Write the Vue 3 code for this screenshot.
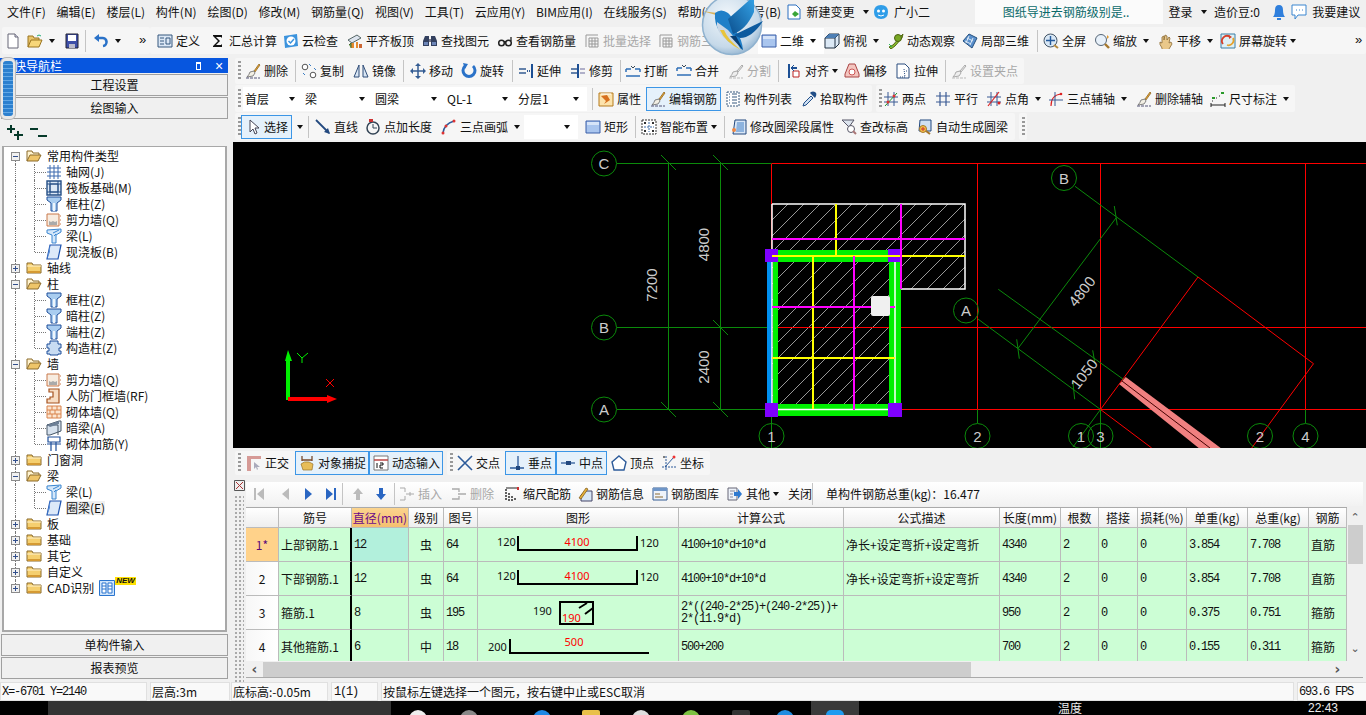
<script setup>
const menus = ['文件(F)', '编辑(E)', '楼层(L)', '构件(N)', '绘图(D)', '修改(M)', '钢筋量(Q)', '视图(V)', '工具(T)', '云应用(Y)', 'BIM应用(I)', '在线服务(S)', '帮助(H)', '版本号(B)']

const sep = (w) => ({ sep: 1, w })
const grip = (w) => ({ grip: 1, w })

const topLeft = [
  { i: 'new', w: 22 }, { i: 'open', w: 37, a: 1 }, { i: 'save', w: 21 }, sep(8), { i: 'undo', w: 46, a: 1 }, { more: 1, w: 11 },
]
const topMain = [
  { i: 'define', t: '定义', w: 53 }, { i: 'sigma', t: '汇总计算', w: 73 }, { i: 'cloud', t: '云检查', w: 64 },
  { i: 'level', t: '平齐板顶', w: 75 }, { i: 'find', t: '查找图元', w: 75 }, { i: 'glasses', t: '查看钢筋量', w: 87 },
  { i: 'batch', t: '批量选择', w: 74, dim: 1 }, { i: 'batch', t: '钢筋三维', w: 100, dim: 1 },
  { i: 'flat', t: '二维', w: 66, a: 1, white: 1 }, { i: 'box', t: '俯视', w: 64, a: 1 }, { i: 'orbit', t: '动态观察', w: 74 },
  { i: 'local', t: '局部三维', w: 75 }, sep(6), { i: 'full', t: '全屏', w: 51 }, { i: 'zoom', t: '缩放', w: 64, a: 1 },
  { i: 'hand', t: '平移', w: 62, a: 1 }, { i: 'spin', t: '屏幕旋转', w: 135, a: 2 }, { more: 1, w: 11 },
]

const rows = [
  [
    [
      grip(10), { i: 'brush', t: '删除', w: 50 }, sep(6), { i: 'copy', t: '复制', w: 52 }, { i: 'mirror', t: '镜像', w: 50 }, sep(7),
      { i: 'move', t: '移动', w: 51 }, { i: 'rotate', t: '旋转', w: 51 }, sep(6), { i: 'extend', t: '延伸', w: 52 },
      { i: 'trim', t: '修剪', w: 50 }, sep(5), { i: 'break', t: '打断', w: 51 }, { i: 'merge', t: '合并', w: 52 },
      { i: 'split', t: '分割', w: 50, dim: 1 }, sep(8), { i: 'align', t: '对齐', w: 58, a: 2 }, { i: 'offset', t: '偏移', w: 51 },
      { i: 'stretch', t: '拉伸', w: 50 }, sep(6), { i: 'split', t: '设置夹点', w: 73, dim: 1 },
    ],
  ],
  [
    [
      grip(8), { s: '首层', w: 60 }, { s: '梁', w: 70 }, { s: '圆梁', w: 72 }, { s: 'QL-1', w: 71 }, { s: '分层1', w: 71 }, { sp: 1, w: 5 }, sep(6),
      { i: 'prop', t: '属性', w: 48 }, { i: 'brush', t: '编辑钢筋', w: 75, on: 1 }, { sp: 1, w: 4 }, { i: 'list', t: '构件列表', w: 76 }, { i: 'pick', t: '拾取构件', w: 71 },
    ],
    [
      grip(7), { i: 'two', t: '两点', w: 52 }, { i: 'para', t: '平行', w: 51 }, { i: 'angle', t: '点角', w: 62, a: 1 },
      { i: 'three', t: '三点辅轴', w: 88, a: 1 }, { i: 'brush', t: '删除辅轴', w: 74 }, { i: 'dim', t: '尺寸标注', w: 85, a: 1 },
    ],
  ],
  [
    [
      grip(6), { i: 'cursor', t: '选择', w: 51, on: 1 }, { arrow: 1, w: 16 }, sep(7), { i: 'line', t: '直线', w: 50 }, { i: 'ptlen', t: '点加长度', w: 76 },
      { i: 'arc', t: '三点画弧', w: 83, a: 1 }, { s: '', w: 54 }, { sp: 1, w: 7 }, { i: 'flat', t: '矩形', w: 50 }, sep(6),
      { i: 'smart', t: '智能布置', w: 83, a: 2 }, sep(7), { i: 'seg', t: '修改圆梁段属性', w: 110 }, { i: 'elev', t: '查改标高', w: 76 },
      { i: 'auto', t: '自动生成圆梁', w: 98 },
    ],
    [grip(8)],
  ],
]

const snapRows = [
  [
    grip(11), { i: 'ortho', t: '正交', w: 49 }, { i: 'snap', t: '对象捕捉', w: 74, on: 1 }, { i: 'dyn', t: '动态输入', w: 74, on: 1 },
  ],
  [
    grip(10), { i: 'cross', t: '交点', w: 48 }, { i: 'perp', t: '垂点', w: 51, on: 1 }, { i: 'mid', t: '中点', w: 51, on: 1 }, { sp: 1, w: 4 },
    { i: 'vertex', t: '顶点', w: 50 }, { i: 'coord', t: '坐标', w: 49 },
  ],
]

const tableTools = [
  { i: 'first', w: 27, dim: 1 }, { i: 'prev', w: 22, dim: 1 }, { i: 'next', w: 23 }, { i: 'last', w: 19 }, sep(8),
  { i: 'up', w: 23, dim: 1 }, { i: 'down', w: 21 }, sep(5), { i: 'insert', t: '插入', w: 52, dim: 1 }, { i: 'remove', t: '删除', w: 53, dim: 1 },
  { i: 'scale', t: '缩尺配筋', w: 73 }, { i: 'info', t: '钢筋信息', w: 75 }, { i: 'lib', t: '钢筋图库', w: 75 }, { i: 'other', t: '其他', w: 61, a: 2 },
  { t: '关闭', w: 24 }, sep(14),
]

const tree = [
  { f: 'open', t: '常用构件类型' },
  { i: 'grid', t: '轴网(J)' }, { i: 'raft', t: '筏板基础(M)' }, { i: 'col', t: '框柱(Z)' }, { i: 'wall', t: '剪力墙(Q)' }, { i: 'beam', t: '梁(L)' }, { i: 'slab', t: '现浇板(B)', last: 1 },
  { f: 'closed', t: '轴线' },
  { f: 'open', t: '柱' },
  { i: 'col', t: '框柱(Z)' }, { i: 'col', t: '暗柱(Z)' }, { i: 'col', t: '端柱(Z)' }, { i: 'gcol', t: '构造柱(Z)', last: 1 },
  { f: 'open', t: '墙' },
  { i: 'wall', t: '剪力墙(Q)' }, { i: 'door', t: '人防门框墙(RF)' }, { i: 'brick', t: '砌体墙(Q)' }, { i: 'dark', t: '暗梁(A)' }, { i: 'rebar', t: '砌体加筋(Y)', last: 1 },
  { f: 'closed', t: '门窗洞' },
  { f: 'open', t: '梁' },
  { i: 'beam', t: '梁(L)' }, { i: 'slab', t: '圈梁(E)', last: 1, sel: 1 },
  { f: 'closed', t: '板' }, { f: 'closed', t: '基础' }, { f: 'closed', t: '其它' }, { f: 'closed', t: '自定义' },
  { f: 'closed', t: 'CAD识别', cad: 1, end: 1 },
]

const colWidths = [33, 73, 57, 35, 34, 201, 165, 156, 61, 38, 39, 49, 61, 61, 38]
const heads = ['', '筋号', '直径(mm)', '级别', '图号', '图形', '计算公式', '公式描述', '长度(mm)', '根数', '搭接', '损耗(%)', '单重(kg)', '总重(kg)', '钢筋']
const bars = [
  { n: '1*', name: '上部钢筋.1', d: '12', g: '虫', fig: '64', shape: 'u', f: ['4100+10*d+10*d'], desc: '净长+设定弯折+设定弯折', len: '4340', w1: '3.854', w2: '7.708', k: '直筋', h: 34 },
  { n: '2', name: '下部钢筋.1', d: '12', g: '虫', fig: '64', shape: 'u', f: ['4100+10*d+10*d'], desc: '净长+设定弯折+设定弯折', len: '4340', w1: '3.854', w2: '7.708', k: '直筋', h: 34 },
  { n: '3', name: '箍筋.1', d: '8', g: '虫', fig: '195', shape: 'box', f: ['2*((240-2*25)+(240-2*25))+', '2*(11.9*d)'], desc: '', len: '950', w1: '0.375', w2: '0.751', k: '箍筋', h: 34 },
  { n: '4', name: '其他箍筋.1', d: '6', g: '中', fig: '18', shape: 'l', f: ['500+200'], desc: '', len: '700', w1: '0.155', w2: '0.311', k: '箍筋', h: 33 },
]

const hLines = [163.5, 327.5, 409.5]
const vLines = [771.5, 977.5, 1100.5, 1305.5]
const bubbles = [
  { x: 604, y: 163.5, t: 'C' }, { x: 604, y: 327.5, t: 'B' }, { x: 604, y: 409.5, t: 'A' },
  { x: 966, y: 310.5, t: 'A' }, { x: 1064, y: 178, t: 'B' },
  { x: 771.5, y: 436, t: '1' }, { x: 977.5, y: 436, t: '2' }, { x: 1081, y: 436, t: '1' },
  { x: 1100.5, y: 436, t: '3' }, { x: 1260, y: 436, t: '2' }, { x: 1305.5, y: 436, t: '4' },
]
const dimTexts = [
  { t: '7200', x: 651.5, y: 285, r: -90 }, { t: '4800', x: 703, y: 244.5, r: -90 }, { t: '2400', x: 703, y: 367, r: -90 },
  { t: '4800', x: 1081.7, y: 291.3, r: -52 }, { t: '1050', x: 1084, y: 373.7, r: -52 },
]
</script>

<template>
  <div class="app">
    <!-- icon sheet -->
    <svg class="sheet" width="0" height="0">
      <symbol id="i-new" viewBox="0 0 16 16"><path d="M3 1h7l3 3v11H3z" fill="#fff" stroke="#667"/><path d="M10 1v3h3" fill="#dde" stroke="#667"/></symbol>
      <symbol id="i-open" viewBox="0 0 16 16"><path d="M1 14V3h5l1 2h5v3" fill="#e9c46a" stroke="#9a7420"/><path d="M1 14l3-7h11l-3 7z" fill="#f7d679" stroke="#9a7420"/><path d="M10 3q2-2 4 0" fill="none" stroke="#2a7"/></symbol>
      <symbol id="i-save" viewBox="0 0 16 16"><path d="M2 1h12v14H2z" fill="#3e4fa8" stroke="#223"/><path d="M4 2h8v6H4z" fill="#fff"/><path d="M5 11h6v4H5z" fill="#bbc"/></symbol>
      <symbol id="i-undo" viewBox="0 0 16 16"><path d="M4 5h5a4 4 0 0 1 1 8" fill="none" stroke="#2a72c8" stroke-width="2.6"/><path d="M6 1v8L1 5z" fill="#2a72c8"/></symbol>
      <symbol id="i-define" viewBox="0 0 16 16"><path d="M1 2h14v12H1z" fill="#dbe7f5" stroke="#36587f"/><path d="M3 5h4M3 8h4M3 11h4M9 5h4v6H9z" fill="none" stroke="#36587f"/></symbol>
      <symbol id="i-sigma" viewBox="0 0 16 16"><path d="M3 2h9v3L11 4H6l4 4-4 4h5l1-1v3H3v-1l5-5-5-5z" fill="#111"/></symbol>
      <symbol id="i-cloud" viewBox="0 0 16 16"><path d="M1 3l13-2 1 12-13 2z" fill="#3b93dd"/><circle cx="8" cy="8" r="4.5" fill="#fff"/><path d="M5.5 8l2 2 3.500-4" fill="none" stroke="#3b93dd" stroke-width="1.500"/></symbol>
      <symbol id="i-level" viewBox="0 0 16 16"><path d="M1 7l9-5 4 3-9 5z" fill="#dde4ee" stroke="#566"/><path d="M4 10h3v5H4zM9 9h2v6H9z" fill="#e68a2e"/><path d="M12 11h3v4h-3z" fill="#c63"/><path d="M2 12l2-2v5" fill="#7a5" stroke="#463"/></symbol>
      <symbol id="i-find" viewBox="0 0 16 16"><path d="M3 3h4v10H1V8zM9 3h4l2 5v5H9z" fill="#33405f"/><path d="M7 6h2v3H7z" fill="#778"/><path d="M2 9h4v3H2zM10 9h4v3h-4z" fill="#6d86b8"/></symbol>
      <symbol id="i-glasses" viewBox="0 0 16 16"><circle cx="4.500" cy="10" r="2.800" fill="none" stroke="#222" stroke-width="1.500"/><circle cx="11.500" cy="10" r="2.800" fill="none" stroke="#222" stroke-width="1.500"/><path d="M7 9q1-1 2 0M14 8V4" fill="none" stroke="#222" stroke-width="1.300"/></symbol>
      <symbol id="i-batch" viewBox="0 0 16 16"><path d="M2 2h12M2 2v12M5 5h9v9H5zM5 8h9M5 11h9M8 5v9M11 5v9" fill="none" stroke="#999"/></symbol>
      <symbol id="i-flat" viewBox="0 0 16 16"><path d="M1 2h14v12H1z" fill="#a9c5ee" stroke="#3a5ea8"/><path d="M2 3h12v3H2z" fill="#d6e4f8"/></symbol>
      <symbol id="i-box" viewBox="0 0 16 16"><path d="M1 5l4-4h10v10l-4 4H1z" fill="#dce9f6" stroke="#234"/><path d="M1 5h10v10M11 5l4-4" fill="none" stroke="#234"/><path d="M1 5l4-4h10l-4 4z" fill="#4d7fb5"/></symbol>
      <symbol id="i-orbit" viewBox="0 0 16 16"><path d="M1 14l4-2 8-9 2-2-1 4-7 8-4 3z" fill="#8aba2f" stroke="#546b12"/><circle cx="10" cy="5" r="3.500" fill="#79a825" stroke="#4b6210"/><path d="M1 11l3 3" stroke="#2b5"/></symbol>
      <symbol id="i-local" viewBox="0 0 16 16"><path d="M1 8l6-7 8 4-5 10z" fill="#5a8fcb" stroke="#24507f"/><path d="M5 5l6 3M3 8l6 3M7 3l-3 7M11 5l-3 7" stroke="#dce9f6" fill="none"/></symbol>
      <symbol id="i-full" viewBox="0 0 16 16"><circle cx="7.500" cy="7.500" r="6.500" fill="#d8e7f5" stroke="#456"/><path d="M7.500 3v9M3 7.500h9" stroke="#245a9c" stroke-width="1.400"/><path d="M11 12l4 3" stroke="#b5893f" stroke-width="2"/></symbol>
      <symbol id="i-zoom" viewBox="0 0 16 16"><circle cx="7" cy="7" r="5.500" fill="#e8f1fa" stroke="#567"/><path d="M11 11l4 4" stroke="#a5772c" stroke-width="2.400"/><path d="M13 2l2 2-2 2" fill="#d93"/></symbol>
      <symbol id="i-hand" viewBox="0 0 16 16"><path d="M4 15q-3-4-2-6l2 1V4l2-1v4l1-5 2 1v4l2-3 1 1-1 5 2-1 1 2-3 5q-1 3-7 3z" fill="#e9c88a" stroke="#8a6a33" stroke-width=".8"/></symbol>
      <symbol id="i-spin" viewBox="0 0 16 16"><path d="M1 1h14v14H1z" fill="#dff0f5" stroke="#3b7ea6"/><path d="M3 11a5 5 0 0 1 7-7" fill="none" stroke="#d5402b" stroke-width="1.800"/><path d="M13 5a5 5 0 0 1-6 7" fill="none" stroke="#e5a12b" stroke-width="1.800"/><path d="M9 2l3 2-3 2z" fill="#d5402b"/></symbol>
      <symbol id="i-brush" viewBox="0 0 16 16"><path d="M9 8l5-7 1 1-5 7z" fill="#e0a63a" stroke="#8a5c12" stroke-width=".7"/><path d="M5 9l4-1 1 2-2 3-6 1q2-2 3-5z" fill="#f2efe4" stroke="#666" stroke-width=".8"/><path d="M1 15h14" stroke="#557" stroke-dasharray="3 1"/></symbol>
      <symbol id="i-copy" viewBox="0 0 16 16"><circle cx="4" cy="4" r="2.800" fill="#fff" stroke="#555"/><circle cx="12" cy="12" r="2.800" fill="#fff" stroke="#555"/><path d="M8 1l2 2M13 5l2 2M2 10l2 2" stroke="#3b7ec4"/></symbol>
      <symbol id="i-mirror" viewBox="0 0 16 16"><path d="M6 2L1 14h5zM10 2l5 12h-5z" fill="#d9e6f4" stroke="#2f4d78"/></symbol>
      <symbol id="i-move" viewBox="0 0 16 16"><path d="M8 1v14M1 8h14" stroke="#345c93" stroke-width="1.500"/><path d="M8 0l3 3H5zM8 16l3-3H5zM0 8l3-3v6zM16 8l-3-3v6z" fill="#345c93"/></symbol>
      <symbol id="i-rotate" viewBox="0 0 16 16"><path d="M4 3a6 6 0 1 0 8 0" fill="none" stroke="#2a72c8" stroke-width="3"/><path d="M2 0l5 1-3 5z" fill="#2a72c8"/></symbol>
      <symbol id="i-extend" viewBox="0 0 16 16"><path d="M13 1v14h2V1z" fill="#1c4f94"/><path d="M1 6h7M1 10h7" stroke="#345c93" stroke-width="1.400"/><path d="M9 8h4" stroke="#345c93" stroke-dasharray="1 1" stroke-width="2"/></symbol>
      <symbol id="i-trim" viewBox="0 0 16 16"><path d="M7 1v14h2V1z" fill="#1c4f94"/><path d="M1 6h6M1 10h6" stroke="#345c93" stroke-width="1.400"/><path d="M10 6h5M10 10h5" stroke="#99b" stroke-width="1.400"/></symbol>
      <symbol id="i-break" viewBox="0 0 16 16"><path d="M1 6h5M10 6h5M1 13h14M1 6v3M15 6v3" fill="none" stroke="#2f6fb6" stroke-width="1.500"/><path d="M6 3l2 2M10 3L8 5" stroke="#345"/></symbol>
      <symbol id="i-merge" viewBox="0 0 16 16"><path d="M1 5h5M10 5h5M1 12h14M1 5v3M15 5v3" fill="none" stroke="#2f6fb6" stroke-width="1.500"/><path d="M6 2l2 2 2-2" fill="none" stroke="#345"/></symbol>
      <symbol id="i-split" viewBox="0 0 16 16"><path d="M9 8l5-6 1 1-5 6zM5 9l4-1 1 2-2 3-6 1q2-2 3-5z" fill="#eee" stroke="#aaa"/><path d="M1 15h14" stroke="#bbb" stroke-dasharray="3 1"/></symbol>
      <symbol id="i-align" viewBox="0 0 16 16"><path d="M2 1h2v14H2z" fill="#1c4f94"/><path d="M5 4h6v2H5z" fill="#1c4f94"/><path d="M7 8h6v6H7z" fill="#fff" stroke="#b22"/><path d="M8 2L5 5l3 3" fill="none" stroke="#1c4f94"/></symbol>
      <symbol id="i-offset" viewBox="0 0 16 16"><path d="M5 1h6l4 10v3H1v-3z" fill="#f3c6c0" stroke="#a44"/><circle cx="8" cy="9" r="3" fill="#fff" stroke="#c55"/></symbol>
      <symbol id="i-stretch" viewBox="0 0 16 16"><path d="M2 1h8l4 4v10H2z" fill="#fff" stroke="#2a4d7f"/><path d="M9 6l1 8M11 8h2M5 14h6" stroke="#2a4d7f" stroke-dasharray="1 1"/></symbol>
      <symbol id="i-change" viewBox="0 0 16 16"><path d="M2 1h8l4 4v10H2z" fill="#fff" stroke="#2a6fc0"/><path d="M9 7l4 3-4 3-3-3z" fill="#3aa537"/></symbol>
      <symbol id="i-prop" viewBox="0 0 16 16"><path d="M1 2h14v13H1z" fill="#fce3ac" stroke="#b57a1c"/><path d="M3 5l5 5-2 3 6-4-3-5z" fill="#d7701e"/><path d="M3 3h10" stroke="#fff"/></symbol>
      <symbol id="i-list" viewBox="0 0 16 16"><path d="M2 1h12v14H2z" fill="#fff" stroke="#36587f" stroke-dasharray="2 1"/><path d="M7 3h5M7 6h5M7 9h5M7 12h5M4 3h1M4 6h1M4 9h1M4 12h1" stroke="#36587f"/></symbol>
      <symbol id="i-pick" viewBox="0 0 16 16"><path d="M10 5l-7 7-1 3 3-1 7-7z" fill="#cfe0f3" stroke="#224f88"/><path d="M9 2l5 5 1-2q1-3-1-4t-4 0z" fill="#224f88"/></symbol>
      <symbol id="i-two" viewBox="0 0 16 16"><path d="M5 1v14M11 1v14M1 6h14M1 11h14" stroke="#3a5a94"/><path d="M2 15L14 2" stroke="#1a9a2a"/><circle cx="5" cy="11" r="1.500" fill="#d33"/><circle cx="11" cy="5" r="1.500" fill="#d33"/></symbol>
      <symbol id="i-para" viewBox="0 0 16 16"><path d="M5 1v14M11 1v14M1 5h14M1 11h14" stroke="#3a5a94" stroke-width="1.200"/></symbol>
      <symbol id="i-angle" viewBox="0 0 16 16"><path d="M5 1v14M11 1v14M1 6h14M1 11h14" stroke="#3a5a94"/><path d="M2 15L13 1" stroke="#d22" stroke-width="1.200"/><circle cx="13" cy="12" r="1.500" fill="#d22"/></symbol>
      <symbol id="i-three" viewBox="0 0 16 16"><path d="M3 15q0-11 10-12" fill="none" stroke="#d22" stroke-width="1.200"/><path d="M1 9h14M7 1v14" stroke="#3a5a94"/><circle cx="13" cy="3" r="1.300" fill="#d22"/></symbol>
      <symbol id="i-dim" viewBox="0 0 16 16"><path d="M1 12v4M15 12v4M1 14h14" stroke="#222"/><path d="M2 6h3v2H2zM11 1h3v2h-3z" fill="#2a9a2a"/><path d="M2 10h1M6 7h1M9 5h1" stroke="#333"/></symbol>
      <symbol id="i-cursor" viewBox="0 0 16 16"><path d="M5 1v12l3-3 2 5 2-1-2-5h4z" fill="#fff" stroke="#445"/></symbol>
      <symbol id="i-line" viewBox="0 0 16 16"><path d="M1 1l13 13" stroke="#23497f" stroke-width="1.800"/><path d="M15 15l-6-2 4-4z" fill="#23497f"/></symbol>
      <symbol id="i-ptlen" viewBox="0 0 16 16"><circle cx="8" cy="9" r="6" fill="none" stroke="#345" stroke-width="1.500"/><path d="M8 5v4h4" stroke="#345" fill="none"/><path d="M4 0h4v3H4z" fill="#c33"/></symbol>
      <symbol id="i-arc" viewBox="0 0 16 16"><path d="M2 14Q3 5 13 2" fill="none" stroke="#2d5b9a" stroke-width="1.500"/><circle cx="2" cy="14" r="1.500" fill="#d33"/><circle cx="5" cy="7" r="1.500" fill="#d33"/><circle cx="13" cy="2" r="1.500" fill="#d33"/></symbol>
      <symbol id="i-smart" viewBox="0 0 16 16"><path d="M1 1h14v14H1z" fill="#fff" stroke="#333" stroke-dasharray="2 1"/><path d="M8 3v10M3 8h10" stroke="#3a6aa8" stroke-dasharray="2 1"/><path d="M3 3h2v2H3zM11 3h2v2h-2zM3 11h2v2H3zM11 11h2v2h-2z" fill="#333"/></symbol>
      <symbol id="i-seg" viewBox="0 0 16 16"><path d="M4 1h11v14H2z" fill="#d8e6f6" stroke="#23497f"/><path d="M6 3h7v10H5z" fill="#8db3de"/><circle cx="3" cy="11" r="2" fill="#e84"/></symbol>
      <symbol id="i-elev" viewBox="0 0 16 16"><path d="M1 1h12L8 8z" fill="#dde5ef" stroke="#556"/><circle cx="10" cy="10" r="3.500" fill="#fff" stroke="#556"/><path d="M12 12l3 3" stroke="#a77" stroke-width="2"/></symbol>
      <symbol id="i-auto" viewBox="0 0 16 16"><path d="M3 1h11v11H2z" fill="#cfe0f3" stroke="#23497f"/><circle cx="6" cy="10" r="3.500" fill="#f5c24a" stroke="#a5772c"/><path d="M4 10h4M6 8v4" stroke="#c33"/><path d="M9 12l4 3" stroke="#a5772c" stroke-width="2"/></symbol>
      <symbol id="i-ortho" viewBox="0 0 16 16"><path d="M1 1h14v3H5v12H1z" fill="#d69a96"/><path d="M8 7v7l2-2 1 3 1-1-1-2h3z" fill="#aab"/></symbol>
      <symbol id="i-snap" viewBox="0 0 16 16"><path d="M3 1v5M13 1v5M3 5h10" stroke="#7a4a2a" stroke-width="1.300"/><path d="M2 9q3-3 8-2l4 2-1 6H4z" fill="#e7bd58" stroke="#98722a" stroke-width=".7"/></symbol>
      <symbol id="i-dyn" viewBox="0 0 16 16"><path d="M1 1h14v14H1z" fill="#fff" stroke="#777"/><path d="M1 5h14" stroke="#b44" stroke-width="1.500"/><path d="M4 8v5M7 8h3v2H7v3h3" stroke="#111" fill="none"/></symbol>
      <symbol id="i-cross" viewBox="0 0 16 16"><path d="M1 1l14 14M15 1L1 15" stroke="#2d5b9a" stroke-width="1.600"/></symbol>
      <symbol id="i-perp" viewBox="0 0 16 16"><path d="M9 1v12M1 13h14" stroke="#2d5b9a" stroke-width="1.300"/><rect x="7" y="11" width="4" height="4" fill="#23497f"/></symbol>
      <symbol id="i-mid" viewBox="0 0 16 16"><path d="M1 8h14" stroke="#2d5b9a" stroke-width="1.300"/><rect x="6" y="6" width="5" height="4" fill="#23497f"/></symbol>
      <symbol id="i-vertex" viewBox="0 0 16 16"><path d="M8 1l7 6-2 8H3L1 7z" fill="#fff" stroke="#2d5b9a" stroke-width="1.400"/></symbol>
      <symbol id="i-coord" viewBox="0 0 16 16"><path d="M5 1v14M1 12h14" stroke="#2d5b9a" stroke-dasharray="2 1"/><path d="M4 12l9-10" stroke="#2d5b9a"/><circle cx="13" cy="2" r="1.500" fill="#e33"/><circle cx="3" cy="2" r="1" fill="#555"/></symbol>
      <symbol id="i-first" viewBox="0 0 16 16"><path d="M3 2h2v12H3zM13 2v12L6 8z" fill="#bbb"/></symbol>
      <symbol id="i-prev" viewBox="0 0 16 16"><path d="M11 2v12L4 8z" fill="#bbb"/></symbol>
      <symbol id="i-next" viewBox="0 0 16 16"><path d="M5 2v12l7-6z" fill="#2a66c2"/></symbol>
      <symbol id="i-last" viewBox="0 0 16 16"><path d="M11 2h2v12h-2zM3 2v12l7-6z" fill="#2a66c2"/></symbol>
      <symbol id="i-up" viewBox="0 0 16 16"><path d="M8 2l5 6h-3v6H6V8H3z" fill="#bbb"/></symbol>
      <symbol id="i-down" viewBox="0 0 16 16"><path d="M8 14L3 8h3V2h4v6h3z" fill="#2a66c2"/></symbol>
      <symbol id="i-insert" viewBox="0 0 16 16"><path d="M1 2h5v4M1 14h5v-4M7 8h8M11 6v4" fill="none" stroke="#aaa"/></symbol>
      <symbol id="i-remove" viewBox="0 0 16 16"><path d="M1 3h7v3M1 13h7v-3M7 8h8" fill="none" stroke="#aaa" stroke-width="1.300"/></symbol>
      <symbol id="i-scale" viewBox="0 0 16 16"><path d="M2 3v12M5 7v8M8 10v5M11 12v3" stroke="#222" stroke-width="1.400" stroke-dasharray="2 1"/><path d="M2 2h12" stroke="#222"/><path d="M13 1h2v3h-2z" fill="#c33"/></symbol>
      <symbol id="i-info" viewBox="0 0 16 16"><path d="M8 5h7v10H4v-6z" fill="#d8e6f6" stroke="#446"/><path d="M2 12l7-10 2 1-7 10z" fill="#e5b23c" stroke="#7a5312" stroke-width=".7"/></symbol>
      <symbol id="i-lib" viewBox="0 0 16 16"><path d="M1 2h14v12H1z" fill="#eef3fa" stroke="#345c93"/><path d="M1 2h14v3H1z" fill="#6f96c8"/><path d="M3 8h5M3 11h8" stroke="#8a6a33"/></symbol>
      <symbol id="i-other" viewBox="0 0 16 16"><path d="M1 2h9v12H1z" fill="#eef3fa" stroke="#667"/><path d="M3 5h5M3 8h3M3 11h3" stroke="#889"/><path d="M7 6h4V3l4 5-4 5v-3H7z" fill="#2f7ad0"/></symbol>
      <symbol id="i-grid" viewBox="0 0 16 16"><path d="M4 1v14M8 1v14M12 1v14M1 4h14M1 8h14M1 12h14" stroke="#3a68ae"/></symbol>
      <symbol id="i-raft" viewBox="0 0 16 16"><path d="M1 1h14v14H1z" fill="#dce8f6" stroke="#244f86" stroke-width="1.400"/><path d="M4 4h8v8H4zM1 4h14M1 12h14M4 1v14M12 1v14" fill="none" stroke="#244f86"/></symbol>
      <symbol id="i-col" viewBox="0 0 16 16"><path d="M1 1h14v3l-4 3v8H5V7L1 4z" fill="#a9cdf0" stroke="#1f4f9a"/><path d="M7 7h2v8H7z" fill="#eef5fc"/></symbol>
      <symbol id="i-wall" viewBox="0 0 16 16"><path d="M1 2h12v12H1z" fill="#f7ece0" stroke="#c9794a"/><path d="M3 9l2 1 2-1 2 1 2-1v4H3z" fill="#aaa"/><path d="M14 4h1M14 8h1M14 12h1" stroke="#c9794a"/></symbol>
      <symbol id="i-beam" viewBox="0 0 16 16"><path d="M1 2l14-1v3l-5 3v8H6V7L1 5z" fill="#d4e7fa" stroke="#3a86d0"/><path d="M7 5l6-3M8 8l2-2" stroke="#3a86d0"/></symbol>
      <symbol id="i-slab" viewBox="0 0 16 16"><path d="M4 1h11l-3 14H1z" fill="#dce9f9" stroke="#1f55b0" stroke-width="1.200"/><path d="M1 15l3-7v-7" fill="#5a8fd8"/></symbol>
      <symbol id="i-gcol" viewBox="0 0 16 16"><path d="M4 1h8v3h3v4h-2v3h2v3h-3v1H4v-1H1v-3h2V8H1V4h3z" fill="#c8dcf2" stroke="#1f4f9a"/></symbol>
      <symbol id="i-door" viewBox="0 0 16 16"><path d="M3 1h10v14H1v-4h3V9h3V4H3z" fill="#f7ddc4" stroke="#a5521e" stroke-width="1.200"/></symbol>
      <symbol id="i-brick" viewBox="0 0 16 16"><path d="M1 2h14v12H1z" fill="#fbe5d0" stroke="#d9824a"/><path d="M1 6h14M1 10h14M6 2v4M11 2v4M4 6v4M9 6v4M6 10v4M11 10v4" stroke="#d9824a"/></symbol>
      <symbol id="i-dark" viewBox="0 0 16 16"><path d="M1 5l12-4 2 0v10l-11 4H1z" fill="#d7e2ee" stroke="#456"/><path d="M1 5h11v10" fill="none" stroke="#456"/><path d="M1 5l12-4v3L4 7z" fill="#6c7f96"/></symbol>
      <symbol id="i-rebar" viewBox="0 0 16 16"><path d="M2 1h12v5H2z" fill="#fff" stroke="#1f4f9a" stroke-width="1.200"/><path d="M1 8h14M5 6v9M10 6v9" stroke="#1f4f9a" stroke-width="1.200"/></symbol>
      <symbol id="i-fopen" viewBox="0 0 16 16"><path d="M1 13V3h5l1 2h6v2" fill="#fff3cf" stroke="#8b6b2a"/><path d="M1 13l3-6h11l-3 6z" fill="#efc569" stroke="#8b6b2a"/></symbol>
      <symbol id="i-fclosed" viewBox="0 0 16 16"><path d="M1 13V3h5l1 2h8v8z" fill="#f5cf6f" stroke="#8b6b2a"/><path d="M1 6h14" stroke="#fff3cf"/><path d="M2 11h12v2H2z" fill="#d59a33"/></symbol>
      <symbol id="i-cad" viewBox="0 0 16 16"><path d="M.5.5h15v15H.5z" fill="#cfe4fb" stroke="#2a75cf"/><path d="M3 3h4v10H3zM9 3h4v10H9z" fill="#fff" stroke="#2a75cf"/><path d="M3 6h4M3 9h4M9 6h4M9 9h4" stroke="#2a75cf"/></symbol>
    </svg>

    <div class="menubar">
      <span v-for="m in menus" :key="m">{{ m }}</span>
      <svg class="ic first-tool"><use href="#i-change" /></svg>
      <span class="tight">新建变更</span>
      <b class="arrow arrow-a"></b>
      <svg class="ic" viewBox="0 0 16 16"><path d="M8 1q7 0 7 7t-7 7-7-7 7-7z" fill="#2f9de8"/><circle cx="5.500" cy="7" r="1.500" fill="#fff"/><circle cx="10.500" cy="7" r="1.500" fill="#fff"/><path d="M5 11q3 2 6 0" stroke="#fff" fill="none"/></svg>
      <span class="tight">广小二</span>
      <div class="tip">图纸导进去钢筋级别是..</div>
      <span class="tight">登录</span>
      <b class="arrow arrow-b"></b>
      <span class="bean">造价豆:0</span>
      <svg class="ic" viewBox="0 0 16 16"><path d="M8 1q4 0 4 5t2 7H2q2-2 2-7t4-5z" fill="#2f7fdc"/><path d="M6 14h4v2H6z" fill="#2f7fdc"/></svg>
      <svg class="ic chat" viewBox="0 0 16 16"><path d="M1 1h14v10H7l-3 4v-4H1z" fill="#fff" stroke="#3a86d0"/><path d="M5 6h1M8 6h1M11 6h1" stroke="#3a86d0"/></svg>
      <span class="tight">我要建议</span>
    </div>

    <div class="toolbar1">
      <div class="seg seg-a">
        <template v-for="(it, n) in topLeft" :key="n">
          <span v-if="it.sep" class="sep" :style="{ width: it.w + 'px' }"></span>
          <span v-else-if="it.more" class="more" :style="{ width: it.w + 'px' }">»</span>
          <div v-else class="tool" :style="{ width: it.w + 'px' }">
            <svg class="ic"><use :href="'#i-' + it.i" /></svg>
            <b v-if="it.a" class="arrow"></b>
          </div>
        </template>
      </div>
      <div class="seg seg-b">
        <template v-for="(it, n) in topMain" :key="n">
          <span v-if="it.sep" class="sep" :style="{ width: it.w + 'px' }"></span>
          <span v-else-if="it.more" class="more" :style="{ width: it.w + 'px' }">»</span>
          <div v-else class="tool" :class="{ dim: it.dim, white: it.white }" :style="{ width: it.w + 'px' }">
            <svg class="ic"><use :href="'#i-' + it.i" /></svg>
            <span>{{ it.t }}</span>
            <b v-if="it.a" class="arrow" :class="{ near: it.a === 2 }"></b>
          </div>
        </template>
      </div>
    </div>

    <div class="main">
      <aside class="left">
        <div class="nav-title">
          <span>快导航栏</span>
          <i class="pin"></i>
          <i class="close">×</i>
        </div>
        <div class="side-btn">工程设置</div>
        <div class="side-btn">绘图输入</div>
        <div class="tree-tools">
          <svg width="18" height="18" viewBox="0 0 18 18"><path d="M4 1v8M0 5h8M11 7v9M7 11h9" stroke="#063a2a" stroke-width="2"/></svg>
          <svg width="18" height="18" viewBox="0 0 18 18"><path d="M0 5h8M8 12h9" stroke="#063a2a" stroke-width="2"/></svg>
        </div>
        <div class="tree">
          <div v-for="(r, n) in tree" :key="n" class="row" :class="{ child: r.i, last: r.last, end: r.end }">
            <template v-if="r.f">
              <span class="exp" :class="{ plus: r.f === 'closed' }"></span>
              <svg class="ic folder"><use :href="r.f === 'open' ? '#i-fopen' : '#i-fclosed'" /></svg>
              <span>{{ r.t }}</span>
              <template v-if="r.cad">
                <svg class="ic cad"><use href="#i-cad" /></svg>
                <span class="new">NEW</span>
              </template>
            </template>
            <template v-else>
              <i class="stem"></i>
              <i class="tick"></i>
              <svg class="ic"><use :href="'#i-' + r.i" /></svg>
              <span class="label" :class="{ sel: r.sel }">{{ r.t }}</span>
            </template>
          </div>
        </div>
        <div class="side-btn low">单构件输入</div>
        <div class="side-btn">报表预览</div>
      </aside>

      <section class="right">
        <div v-for="(row, rn) in rows" :key="rn" class="tbrow">
          <div v-for="(seg, sn) in row" :key="sn" class="seg">
            <template v-for="(it, n) in seg" :key="n">
              <span v-if="it.sep" class="sep" :style="{ width: it.w + 'px' }"></span>
              <span v-else-if="it.grip" class="grip-wrap" :style="{ width: it.w + 'px' }"><i class="grip"></i></span>
              <span v-else-if="it.sp" :style="{ width: it.w + 'px' }"></span>
              <span v-else-if="it.arrow" class="arrow-btn" :style="{ width: it.w + 'px' }"><b class="arrow near"></b></span>
              <div v-else-if="it.s !== undefined" class="select" :style="{ width: it.w + 'px' }">
                <span>{{ it.s }}</span>
                <b class="arrow"></b>
              </div>
              <div v-else class="tool" :class="{ dim: it.dim, on: it.on }" :style="{ width: it.w + 'px' }">
                <svg class="ic"><use :href="'#i-' + it.i" /></svg>
                <span>{{ it.t }}</span>
                <b v-if="it.a" class="arrow" :class="{ near: it.a === 2 }"></b>
              </div>
            </template>
          </div>
        </div>

        <svg class="canvas" width="1133" height="306" viewBox="233 142 1133 306">
          <defs>
            <pattern id="hatch" width="16" height="16" patternUnits="userSpaceOnUse">
              <path d="M0 16L16 0" stroke="#d8d8d8" stroke-width=".7" />
            </pattern>
          </defs>
          <rect x="233" y="142" width="1133" height="306" fill="#000" />
          <path d="M772 204h193v85h-65v115H772z" fill="url(#hatch)" />

          <g stroke="#f00" fill="none">
            <path v-for="y in hLines" :key="y" :d="`M771.500 ${y}H1366`" />
            <path v-for="x in vLines" :key="x" :d="`M${x} 163.500V409.500`" />
            <path d="M1100.500 409.500L1198 277L1313.500 363.700L1251.700 448M1100.500 409.500L1151.700 448" />
          </g>

          <g stroke="#0b8a0b" fill="none">
            <path d="M617 163.500H771.500M617 327.500H771.500M617 409.500H771.500M668.500 163.500V409.500M720.500 163.500V409.500" />
            <path d="M661 155L676 170M713 155L728 170M713 320L728 335M661 402L676 417M713 402L728 417" />
            <path d="M771.500 409.500V448M977.500 409.500V423M1100.500 409.500V448M1305.500 409.500V423" />
            <path d="M977.500 318.700L1100.500 409.500L1073 447M1075 186.300L1198 277M1018.300 348L1116 218M998.300 289.300L1123.300 379.300" />
            <path d="M1114.300 206L1117.300 225.300M1016.700 339.300L1019.300 358.700M1092.700 350.300L1095 363.700M1072.700 380.300L1074.700 399.300" />
            <circle v-for="b in bubbles" :key="b.x + '-' + b.y" :cx="b.x" :cy="b.y" r="12.500" />
          </g>

          <text v-for="b in bubbles" :key="b.t + b.x + b.y" class="bubble-t" :x="b.x" :y="b.y + 5.500">{{ b.t }}</text>
          <text v-for="d in dimTexts" :key="d.t + d.x" class="dim-t" :transform="`translate(${d.x} ${d.y}) rotate(${d.r})`" y="5.500">{{ d.t }}</text>

          <path d="M1119.300 384.300L1125.700 377L1220.700 448H1198.700z" fill="#f08080" />
          <path d="M1122 381L1210 448" stroke="#400" fill="none" />

          <!-- 梁 ring -->
          <g fill="#00f000">
            <rect x="773" y="250" width="115" height="12" />
            <rect x="773" y="404" width="115" height="12" />
            <rect x="773" y="250" width="5" height="166" />
            <rect x="889" y="250" width="12" height="166" />
          </g>
          <rect x="767" y="256" width="5" height="152" fill="#0090f0" />
          <path d="M772 204V409M772 204H965V289H901M772 409.500H895M895 256V409" stroke="#fff" stroke-width="1.500" fill="none" />
          <g fill="#7f00ff">
            <rect x="765" y="249" width="13" height="13" />
            <rect x="888" y="249" width="13" height="13" />
            <rect x="765" y="403" width="13" height="14" />
            <rect x="888" y="403" width="14" height="14" />
          </g>
          <path d="M772 256H965M836 204V256M813 256V409M772 358H895" stroke="#ff0" stroke-width="2" fill="none" />
          <path d="M772 239H965M901 204V289M854 256V410M772 307H895" stroke="#f0f" stroke-width="2" fill="none" />
          <rect x="871" y="296" width="19" height="20" rx="2" fill="#f0f0f0" />

          <!-- ucs -->
          <path d="M288 400V360" stroke="#00f000" stroke-width="4" />
          <path d="M288 350l4 11h-7z" fill="#00f000" />
          <path d="M288 399H328" stroke="#f00" stroke-width="4" />
          <path d="M337 399l-10 4v-8z" fill="#f00" />
          <path d="M297 353l5 5 6-5M302 358v5" stroke="#00f000" fill="none" />
          <path d="M326 379l8 8M334 379l-8 8" stroke="#f00" fill="none" />
        </svg>

        <div class="snapbar">
          <div v-for="(seg, sn) in snapRows" :key="sn" class="seg">
            <template v-for="(it, n) in seg" :key="n">
              <span v-if="it.grip" class="grip-wrap" :style="{ width: it.w + 'px' }"><i class="grip"></i></span>
              <span v-else-if="it.sp" :style="{ width: it.w + 'px' }"></span>
              <div v-else class="tool" :class="{ on: it.on }" :style="{ width: it.w + 'px' }">
                <svg class="ic"><use :href="'#i-' + it.i" /></svg>
                <span>{{ it.t }}</span>
              </div>
            </template>
          </div>
        </div>

        <div class="table-panel">
          <div class="gutter">
            <span class="panel-x">
              <svg width="11" height="11" viewBox="0 0 11 11"><path d="M.5.5h10v10H.500z" fill="#eee" stroke="#555" /><path d="M2 2l7 7M9 2L2 9" stroke="#a33" /></svg>
            </span>
            <i class="dots"></i>
          </div>
          <div class="table-main">
            <div class="table-tools">
              <template v-for="(it, n) in tableTools" :key="n">
                <span v-if="it.sep" class="sep" :style="{ width: it.w + 'px' }"></span>
                <div v-else class="tool" :class="{ dim: it.dim }" :style="{ width: it.w + 'px' }">
                  <svg v-if="it.i" class="ic"><use :href="'#i-' + it.i" /></svg>
                  <span v-if="it.t">{{ it.t }}</span>
                  <b v-if="it.a" class="arrow near"></b>
                </div>
              </template>
              <span class="total">单构件钢筋总重(kg)：16.477</span>
            </div>
            <div class="table-body">
              <div class="table-clip">
                <table>
                  <colgroup>
                    <col v-for="(w, n) in colWidths" :key="n" :style="{ width: w + 'px' }" />
                  </colgroup>
                  <thead>
                    <tr>
                      <th v-for="(h, n) in heads" :key="n" :class="{ hot: n === 2 }">{{ h }}</th>
                    </tr>
                  </thead>
                  <tbody>
                    <tr v-for="(b, n) in bars" :key="b.n" :style="{ height: b.h + 'px' }">
                      <td class="rowno" :class="{ hot: n === 0 }">{{ b.n }}</td>
                      <td class="name">{{ b.name }}</td>
                      <td class="m" :class="{ cur: n === 0 }">{{ b.d }}</td>
                      <td class="mid">{{ b.g }}</td>
                      <td class="m">{{ b.fig }}</td>
                      <td class="shape">
                        <svg width="200" height="33" viewBox="0 0 200 33">
                          <template v-if="b.shape === 'u'">
                            <text x="19" y="18">120</text>
                            <path d="M40 8V22H159V8" fill="none" stroke="#000" stroke-width="2" />
                            <text class="red" x="99" y="18" text-anchor="middle">4100</text>
                            <text x="162" y="19">120</text>
                          </template>
                          <template v-else-if="b.shape === 'box'">
                            <text x="55" y="19">190</text>
                            <path d="M82 6H115V28H82zM101 12L109 7M107 18L115 12" fill="none" stroke="#000" stroke-width="2" />
                            <text class="red" x="84" y="26">190</text>
                          </template>
                          <template v-else>
                            <text x="10" y="21">200</text>
                            <path d="M32 9V23H171" fill="none" stroke="#000" stroke-width="2" />
                            <text class="red" x="96" y="16" text-anchor="middle">500</text>
                          </template>
                        </svg>
                      </td>
                      <td class="m formula"><div v-for="l in b.f" :key="l">{{ l }}</div></td>
                      <td class="name">{{ b.desc }}</td>
                      <td class="m">{{ b.len }}</td>
                      <td class="m">2</td>
                      <td class="m">0</td>
                      <td class="m">0</td>
                      <td class="m">{{ b.w1 }}</td>
                      <td class="m">{{ b.w2 }}</td>
                      <td class="name">{{ b.k }}</td>
                    </tr>
                  </tbody>
                </table>
              </div>
              <div class="vscroll">
                <span class="chev">⌃</span>
                <i class="vthumb"></i>
                <span class="chev down">⌄</span>
              </div>
            </div>
            <div class="hscroll">
              <span class="h-arrow">‹</span>
              <i class="hthumb"></i>
              <span class="h-arrow">›</span>
            </div>
          </div>
        </div>
      </section>
    </div>

    <div class="status">
      <span class="cell m c1">X=-6701 Y=2140</span>
      <span class="cell c2">层高:3m</span>
      <span class="cell c3">底标高:-0.05m</span>
      <span class="cell m c4">1(1)</span>
      <span class="cell c5">按鼠标左键选择一个图元，按右键中止或ESC取消</span>
      <span class="cell m c6">693.6 FPS</span>
    </div>

    <div class="taskbar">
      <i class="tb-dark"></i>
      <i class="tb-dot c-w"></i>
      <i class="tb-dot c-g"></i>
      <i class="tb-dot c-b"></i>
      <i class="tb-dot c-y"></i>
      <i class="tb-dot c-w2"></i>
      <i class="tb-dot c-gr"></i>
      <i class="tb-dot c-s"></i>
      <i class="tb-dot c-b2"></i>
      <span class="tb-active"><i class="tb-dot c-b3"></i></span>
      <span class="tb-temp">温度</span>
      <span class="tb-time">22:43</span>
    </div>

    <!-- things floating over the window -->
    <div class="handle"><i></i></div>
    <svg class="bird" width="72" height="60" viewBox="0 0 72 60">
      <defs>
        <radialGradient id="glass" cx=".42" cy=".35" r=".75">
          <stop offset="0" stop-color="#f2f7fb" />
          <stop offset=".7" stop-color="#c6d9e9" />
          <stop offset="1" stop-color="#7fa6c7" />
        </radialGradient>
        <linearGradient id="wing" x1="1" y1="0" x2="0" y2="1">
          <stop offset="0" stop-color="#35a4e8" />
          <stop offset="1" stop-color="#0b4f8e" />
        </linearGradient>
      </defs>
      <circle cx="36" cy="25" r="29.500" fill="url(#glass)" stroke="#8fb2cf" stroke-width="1.500" />
      <path d="M6 11L21 13L20 15z" fill="#d9b25a" />
      <path d="M19 13q6-5 13 0q5 4 4 10l4 8q6 8 7 19Q30 42 24 32q-6-8-5-19z" fill="#1f7fc8" />
      <path d="M21 22q-1 8 6 15q8 7 18 13Q38 36 32 30z" fill="#c9d7e6" />
      <path d="M24 30q5 12 21 20Q32 40 28 30z" fill="#e8c43a" />
      <path d="M32 19L58-4L58 12Q50 30 37 34z" fill="url(#wing)" />
      <path d="M38 35L67 21Q56 38 44 38z" fill="#0d5a9e" />
      <path d="M40 36L47 50L34 36z" fill="#0a3f73" />
    </svg>
  </div>
</template>

<style scoped>
.app {
  position: relative;
  width: 1366px;
  height: 715px;
  overflow: hidden;
  background: #f0f0f0;
  color: #111;
  font-family: "Noto Sans CJK SC", "Liberation Sans", sans-serif;
  font-size: 12px;
  line-height: 14px;
  display: flex;
  flex-direction: column;
}
.sheet { position: absolute; }
.ic { width: 16px; height: 16px; flex: none; }
.arrow {
  display: inline-block;
  flex: none;
  width: 0;
  height: 0;
  margin-left: 3px;
  border: 3px solid transparent;
  border-top: 4px solid #111;
  border-bottom: 0;
}
.arrow.near { margin-left: 0; }

.menubar {
  height: 24px;
  margin-bottom: 3px;
  flex: none;
  display: flex;
  align-items: center;
  gap: 10.750px;
  padding-left: 7px;
  white-space: nowrap;
}
.menubar .first-tool { margin-left: -6px; }
.menubar .tight { margin-left: -6px; }
.menubar .arrow-a { margin: 0 -7px 0 -2px; }
.menubar .arrow-b { margin: 0 -1px 0 -2px; }
.menubar .chat { margin-left: -6px; }
.tip {
  width: 188px;
  height: 24px;
  flex: none;
  margin-left: 34px;
  margin-right: 1px;
  padding: 5px 0 0 28px;
  background: #fbfbfb;
  color: #0a6a6a;
  box-sizing: border-box;
}
.bean { margin-left: -3px; }

.toolbar1 {
  height: 27px;
  flex: none;
  display: flex;
  margin-bottom: 3px;
}
.seg {
  display: flex;
  align-items: center;
  background: #f6f6f6;
  white-space: nowrap;
  border-radius: 2px;
}
.seg-a { width: 148px; margin-left: 2px; padding-left: 3px; box-sizing: border-box; }
.seg-b { margin-left: 0; padding-left: 7px; flex: 1; }
.more { flex: none; font-size: 13px; line-height: 10px; align-self: flex-start; margin-top: 8px; font-family: "Liberation Sans", sans-serif; }

.tool {
  flex: none;
  display: flex;
  align-items: center;
  gap: 3px;
  height: 24px;
  box-sizing: border-box;
}
.tool.dim { color: #a8a8a8; }
.tool.white { background: #fff; height: 26px; padding-left: 3px; padding-right: 6px; margin-right: 0; }
.tool.on {
  background: #e5f1fb;
  outline: 1px solid #3c96e6;
  outline-offset: -1px;
  padding-left: 4px;
}
.sep { flex: none; display: flex; height: 22px; }
.sep::before { content: ""; width: 1px; background: #c4c4c4; }
.grip-wrap { flex: none; height: 20px; display: flex; padding-left: 3px; box-sizing: border-box; }
.grip {
  width: 3px;
  background: repeating-linear-gradient(#999 0 2px, transparent 2px 4px);
}
.arrow-btn { flex: none; display: flex; align-items: center; justify-content: center; }
.select {
  flex: none;
  height: 24px;
  display: flex;
  align-items: center;
  background: #fff;
  padding: 0 8px 0 2px;
  box-sizing: border-box;
}
.select .arrow { margin-left: auto; }

.main { flex: 1; min-height: 0; display: flex; }
.left { width: 233px; flex: none; padding-top: 1px; box-sizing: border-box; }
.nav-title {
  width: 228px;
  height: 15px;
  background: #0756df;
  color: #fff;
  display: flex;
  align-items: center;
  padding-left: 14px;
  box-sizing: border-box;
  font-size: 12px;
}
.pin { width: 5px; height: 8px; margin-left: auto; border: 1px solid #fff; border-top-width: 2px; box-sizing: border-box; }
.close { width: 10px; margin: 0 4px 0 13px; font-style: normal; font-size: 14px; text-align: center; font-family: "Liberation Sans", sans-serif; }
.side-btn {
  width: 227px;
  height: 22px;
  margin: 1px 0 0 1px;
  border: 1px solid #a0a0a0;
  background: #f0f0f0;
  box-sizing: border-box;
  display: flex;
  align-items: center;
  justify-content: center;
}
.side-btn.low { margin-top: 2px; }
.tree-tools { height: 27px; display: flex; align-items: center; gap: 5px; padding-left: 7px; box-sizing: border-box; }
.tree {
  width: 225px;
  height: 486px;
  margin-left: 2px;
  border: 1px solid #8a8a8a;
  border-width: 1px 2px 2px 2px;
  border-color: #a8a8a8;
  background: #fff;
  box-sizing: border-box;
  padding-top: 1px;
}
.row {
  position: relative;
  height: 16px;
  display: flex;
  align-items: center;
  white-space: nowrap;
  padding-left: 7px;
}
.row::before {
  content: "";
  position: absolute;
  left: 11px;
  top: 0;
  bottom: 0;
  border-left: 1px dotted #777;
}
.row:first-child::before { top: 8px; }
.row.end::before { bottom: 8px; }
.exp {
  position: relative;
  z-index: 1;
  width: 9px;
  height: 9px;
  flex: none;
  border: 1px solid #8b8b8b;
  background: #f1f1f1;
  box-sizing: border-box;
}
.exp::before {
  content: "";
  position: absolute;
  left: 1px;
  right: 1px;
  top: 3px;
  height: 1px;
  background: #324f8c;
}
.exp.plus::after {
  content: "";
  position: absolute;
  top: 1px;
  bottom: 1px;
  left: 3px;
  width: 1px;
  background: #324f8c;
}
.folder { margin: 0 5px 0 6px; }
.cad { margin-left: 5px; }
.new {
  align-self: flex-start;
  margin-top: -3px;
  font: italic bold 8px/8px "Liberation Sans", sans-serif;
  padding: 0 1px;
  background: #ffe000;
}
.row.child { padding-left: 42px; }
.stem { position: absolute; left: 30px; top: 0; bottom: 0; border-left: 1px dotted #777; }
.row.last .stem { bottom: 8px; }
.tick { position: absolute; left: 31px; width: 11px; top: 8px; border-top: 1px dotted #777; }
.label { margin-left: 4px; }
.label.sel { background: #f0f0f0; }

.right { flex: 1; min-width: 0; padding-top: 1px; display: flex; flex-direction: column; }
.tbrow { height: 26px; flex: none; display: flex; gap: 4px; margin: 0 0 1px 2px; }
.tbrow:nth-child(2), .tbrow:nth-child(3) { height: 27px; }
.tbrow:nth-child(3) { margin-bottom: 2px; }
.canvas { display: block; flex: none; }
.bubble-t { font: 15px "Liberation Sans", sans-serif; fill: #ccc; text-anchor: middle; }
.dim-t { font: 15px "Liberation Sans", sans-serif; fill: #ccc; text-anchor: middle; }
.snapbar { height: 30px; flex: none; display: flex; gap: 4px; padding-left: 2px; box-sizing: border-box; align-items: stretch; padding-top: 3px; padding-bottom: 3px; }
.table-panel { flex: 1; min-height: 0; display: flex; margin-top: 2px; }
.gutter { width: 13px; flex: none; display: flex; flex-direction: column; padding-left: 1px; box-sizing: border-box; }
.panel-x { height: 13px; display: flex; }
.dots {
  flex: 1;
  margin-top: 2px;
  width: 10px;
  background: radial-gradient(circle, #aaa 1px, transparent 1.200px) 0 0 / 4px 4px;
}
.table-main { flex: 1; min-width: 0; display: flex; flex-direction: column; }
.table-tools {
  height: 24px;
  margin: 2px 3px 1px 0;
  flex: none;
  display: flex;
  align-items: center;
  padding-left: 5px;
  background: linear-gradient(#fff, #f2f2f2);
}
.total { font-size: 12px; white-space: nowrap; }
.table-body { height: 154px; flex: none; display: flex; margin-right: 3px; }
.table-clip { width: 1101px; height: 154px; overflow: hidden; border-top: 1px solid #aaa; box-sizing: border-box; }
table { table-layout: fixed; width: 1101px; border-collapse: separate; border-spacing: 0; }
th, td {
  box-sizing: border-box;
  border-right: 1px solid #bbb;
  border-bottom: 1px solid #bbb;
  padding: 0;
  overflow: hidden;
  white-space: nowrap;
}
th {
  height: 20px;
  font-weight: 400;
  background: linear-gradient(#fff, #eee);
  text-align: center;
}
th.hot { background: linear-gradient(#fbd48e, #f5c070); color: #6a0a8a; }
td { background: #ccfed5; padding-left: 2px; }
td.rowno { text-align: center; padding: 0; background: linear-gradient(90deg, #f7f7f7, #fff); }
td.rowno.hot { background: #ffd28a; color: #5a0a7a; }
td:nth-child(2) { border-right: 2px solid #000; }
th:nth-child(2) { border-right: 1px solid #bbb; }
td.mid { text-align: center; padding: 0; }
td.cur { background: #b2f0dc; }
td.m, .cell.m { font-family: "Liberation Mono", monospace; font-size: 12px; letter-spacing: -1.200px; }
td.formula { line-height: 12px; }
td.shape { padding: 0; }
td.shape svg { display: block; }
td.shape text { font: 11px "Noto Sans", sans-serif; fill: #111; }
td.shape text.red { fill: #f00; }

.vscroll { width: 16px; flex: none; background: #f0f0f0; display: flex; flex-direction: column; align-items: center; position: relative; }
.chev { height: 18px; line-height: 22px; font-size: 11px; color: #555; font-family: "DejaVu Sans", sans-serif; }
.chev.down { margin-top: auto; line-height: 12px; }
.vthumb { width: 15px; height: 39px; background: #cdcdcd; }
.hscroll {
  height: 16px;
  flex: none;
  margin-right: 3px;
  display: flex;
  align-items: center;
  background: #f0f0f0;
  border-bottom: 1px solid #aaa;
}
.h-arrow { width: 17px; text-align: center; font: bold 14px/14px "DejaVu Sans", sans-serif; color: #555; flex: none; }
.h-arrow:last-child { margin-left: 358px; }
.hthumb { width: 708px; height: 15px; background: #cdcdcd; flex: none; }

.status { height: 19px; flex: none; display: flex; gap: 3px; }
.cell {
  height: 19px;
  display: flex;
  align-items: center;
  flex: none;
  background: #f9f9f9;
  border: 1px solid #e0e0e0;
  box-sizing: border-box;
  padding-left: 1px;
  white-space: nowrap;
}
.c1 { width: 147px; }
.c2 { width: 80px; margin-right: -2px; }
.c3 { width: 97px; }
.c4 { width: 47px; padding-left: 2px; }
.c5 { width: 913px; }
.c6 { width: 70px; }

.taskbar {
  height: 14px;
  flex: none;
  position: relative;
  overflow: hidden;
  background: #000;
}
.tb-dark { position: absolute; left: 48px; width: 343px; top: 0; bottom: 0; background: #333; }
.tb-active { position: absolute; left: 811px; width: 48px; top: 0; bottom: 0; background: #3a3a3a; }
.tb-dot { position: absolute; top: 9px; width: 18px; height: 18px; border-radius: 50%; }
.c-w { left: 409px; background: #eee; }
.c-g { left: 460px; background: #888; }
.c-b { left: 533px; background: #1e88e5; }
.c-y { left: 582px; background: #e9c04a; border-radius: 2px; }
.c-w2 { left: 632px; background: #ddd; }
.c-gr { left: 682px; background: #7dc242; }
.c-s { left: 732px; background: #333; border-radius: 2px; }
.c-b2 { left: 776px; background: #1f8ce0; }
.c-b3 { left: 15px; background: #1e9bf0; border-radius: 5px; }
.tb-temp { position: absolute; left: 1058px; top: 0; color: #eee; line-height: 14px; }
.tb-time { position: absolute; left: 1308px; top: 0; color: #eee; line-height: 14px; font-family: "Liberation Sans", sans-serif; font-size: 12px; }

.handle {
  position: absolute;
  left: 0;
  top: 57px;
  width: 16px;
  height: 63px;
  padding: 3px 2px;
  box-sizing: border-box;
  background: #e8e8e8;
  border: 1px solid #bbb;
  border-radius: 6px;
}
.handle i {
  display: block;
  height: 100%;
  border-radius: 3px;
  background: repeating-linear-gradient(#2c80cf 0 3px, #62a8e6 3px 4px);
}
.bird { position: absolute; left: 696px; top: 0; }
</style>

<style>
html, body { margin: 0; background: #f0f0f0; overflow: hidden; }
</style>
